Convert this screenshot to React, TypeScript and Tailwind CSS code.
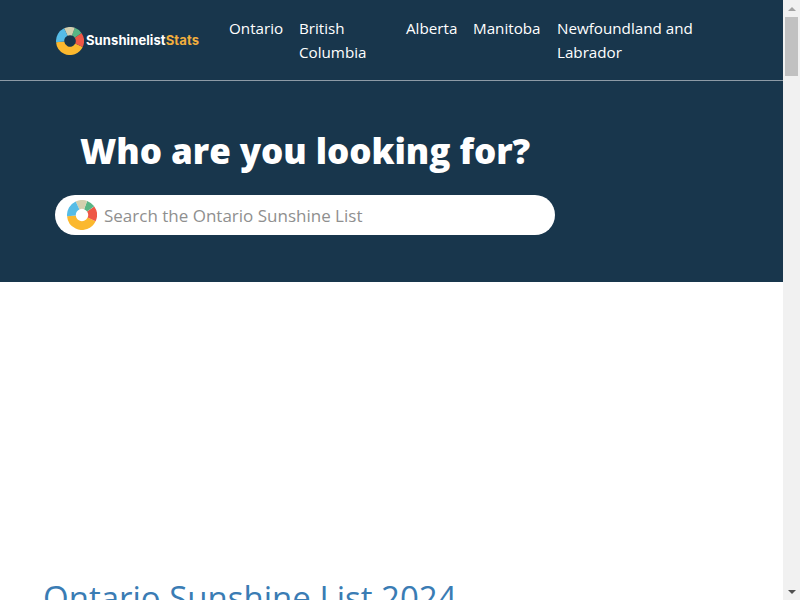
// clockwise from 12 o'clock, in degrees
const segments = [
  { start: 115, len: 150, color: "#fbb82e" },
  { start: 55, len: 60, color: "#ee5746" },
  { start: 20, len: 35, color: "#58b585" },
  { start: -25, len: 45, color: "#d3cfae" },
  { start: -95, len: 70, color: "#56bce6" },
];

function Donut({ size }: { size: number }) {
  return (
    <svg width={size} height={size} viewBox="0 0 34 34" className="shrink-0">
      {segments.map((s) => (
        <circle
          key={s.color}
          cx="17"
          cy="17"
          r="12"
          fill="none"
          stroke={s.color}
          strokeWidth="10"
          pathLength={360}
          strokeDasharray={`${s.len} ${360 - s.len}`}
          transform={`rotate(${s.start - 90} 17 17)`}
        />
      ))}
    </svg>
  );
}

export default function App() {
  return (
    <div className="flex h-screen overflow-hidden bg-white font-['Open_Sans','Noto_Sans',sans-serif]">
      <main className="min-w-0 flex-1 overflow-hidden">
        <header className="flex h-[81px] items-start border-b border-[#8d9ba6] bg-[#18364c] pl-[56px]">
          <a className="mt-[27px] flex w-[173px] shrink-0 items-center gap-[2px]">
            <Donut size={28} />
            <span className="font-['Inter',sans-serif] text-[13px] font-bold tracking-[0.1px] text-white">
              Sunshinelist<span className="text-[#f2ae3d]">Stats</span>
            </span>
          </a>
          <nav className="mt-[16px] flex text-[15.2px] leading-[24px] text-white">
            <a className="w-[70px]">Ontario</a>
            <a className="w-[107px]">British<br />Columbia</a>
            <a className="w-[67px]">Alberta</a>
            <a className="w-[84px]">Manitoba</a>
            <a className="w-[150px]">Newfoundland and Labrador</a>
          </nav>
        </header>

        <section className="h-[201px] bg-[#18364c] pl-[55px] pt-[46px]">
          <h1 className="pl-[25px] text-[35px] font-extrabold leading-[48px] tracking-[-0.05px] whitespace-nowrap text-white">Who are you looking for?</h1>
          <div className="mt-[20px] flex h-[40px] w-[500px] items-center gap-[7px] rounded-[20px] bg-white pl-[12px]">
            <Donut size={30} />
            <span className="pt-[1px] text-[17px] text-[#8f8f8f]">Search the Ontario Sunshine List</span>
          </div>
        </section>

        <section className="pl-[43px] pt-[296px]">
          <h2 className="text-[33px] font-medium leading-[40px] whitespace-nowrap text-[#3a7cb4]">Ontario Sunshine List 2024</h2>
        </section>
      </main>

      <aside className="flex w-[17px] shrink-0 flex-col bg-[#f1f1f1]">
        <div className="flex h-[17px] items-center justify-center">
          <div className="h-0 w-0 border-x-[4px] border-b-[4px] border-x-transparent border-b-[#a3a3a3]" />
        </div>
        <div className="mx-[2px] h-[59px] bg-[#c1c1c1]" />
        <div className="mt-auto flex h-[17px] items-center justify-center">
          <div className="h-0 w-0 border-x-[4px] border-t-[4px] border-x-transparent border-t-[#505050]" />
        </div>
      </aside>
    </div>
  );
}
